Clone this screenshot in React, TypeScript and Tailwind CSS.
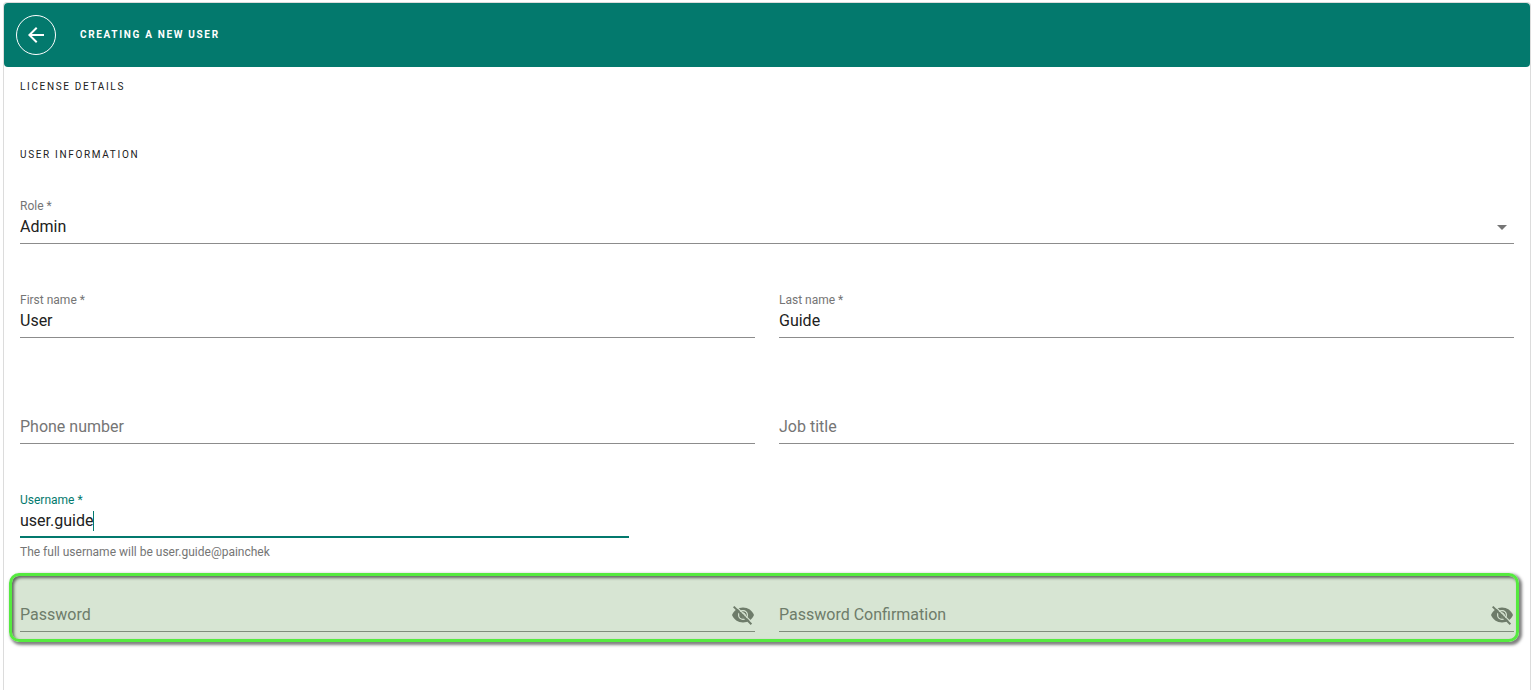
import { useState } from "react";
import { MdArrowBack } from "react-icons/md";

const inputStyles =
  "block h-[30px] w-full min-w-0 appearance-none rounded-none border-b border-[#8c8c8c] bg-transparent text-base text-[#212121] outline-none placeholder:text-[#757575] placeholder:opacity-100";

type FieldProps = {
  id: string;
  label: string;
  value: string;
  onChange: (value: string) => void;
};

function EyeOffIcon({ id }: { id: string }) {
  return (
    <svg viewBox="0 0 24 24" aria-hidden="true" className="size-6">
      <mask id={id}>
        <rect width="24" height="24" fill="white" />
        <circle cx="12" cy="12" r="4.4" fill="none" stroke="black" strokeWidth="1.2" />
        <path d="M10.6 10.8a2 2 0 1 1 1 3" fill="none" stroke="black" strokeWidth="1" />
        <path d="M4 2.3l17.8 17.8" stroke="black" strokeWidth="1.2" />
      </mask>
      <path
        mask={`url(#${id})`}
        fill="currentColor"
        d="M12 4.5C7 4.5 2.73 7.61 1 12c1.73 4.39 6 7.5 11 7.5s9.27-3.11 11-7.5c-1.73-4.39-6-7.5-11-7.5z"
      />
      <path d="M2.7 3.6l17.7 17.7" stroke="currentColor" strokeWidth="2" />
    </svg>
  );
}

// label sits above the line once the field is filled in
function FilledField({ id, label, value, onChange }: FieldProps) {
  return (
    <div>
      <label htmlFor={id} className="block text-xs leading-4 text-[#757575]">
        {label}
      </label>
      <input
        id={id}
        type="text"
        value={value}
        onChange={(e) => onChange(e.target.value)}
        className={`${inputStyles} pb-[5px]`}
      />
    </div>
  );
}

function EmptyField({ id, label, value, onChange }: FieldProps) {
  return (
    <div className="pt-4">
      <input
        id={id}
        type="text"
        aria-label={label}
        placeholder={label}
        value={value}
        onChange={(e) => onChange(e.target.value)}
        className={`${inputStyles} pb-[5px]`}
      />
    </div>
  );
}

function PasswordField({ id, label, value, onChange }: FieldProps) {
  return (
    <div className="pt-4">
      <div className="flex h-[30px] items-center border-b border-[#8c8c8c] pb-[3px]">
        <input
          id={id}
          type="password"
          aria-label={label}
          placeholder={label}
          value={value}
          onChange={(e) => onChange(e.target.value)}
          className="min-w-0 flex-1 bg-transparent text-base text-[#212121] outline-none placeholder:text-[#757575] placeholder:opacity-100"
        />
        <button type="button" aria-label="Show password" className="text-[#757575]">
          <EyeOffIcon id={`${id}-eye`} />
        </button>
      </div>
    </div>
  );
}

export default function App() {
  const [form, setForm] = useState({
    role: "Admin",
    firstName: "User",
    lastName: "Guide",
    phone: "",
    jobTitle: "",
    username: "user.guide",
    password: "",
    confirmation: "",
  });

  const update = (key: keyof typeof form) => (value: string) =>
    setForm((prev) => ({ ...prev, [key]: value }));

  return (
    <main className="flex min-h-screen flex-col bg-white pt-0.5 pr-[5px] pl-[3px] font-['Roboto',sans-serif]">
      <div className="flex-1 rounded-t border-x border-t border-[#dcdcdc]">
        <header className="flex h-16 items-center gap-6 rounded bg-[#03796d] px-3 text-white">
          <button
            type="button"
            aria-label="Back"
            className="flex size-10 items-center justify-center rounded-full border border-white"
          >
            <MdArrowBack className="size-6" />
          </button>
          <h1 className="text-[10px] leading-5 font-bold tracking-[0.1666em] uppercase">
            Creating a new user
          </h1>
        </header>

        <form className="px-4 pt-[10px] pb-12" onSubmit={(e) => e.preventDefault()}>
          <h2 className="text-[10px] leading-5 tracking-[0.1666em] text-[#212121] uppercase">
            License details
          </h2>
          <h2 className="mt-12 text-[10px] leading-5 tracking-[0.1666em] text-[#212121] uppercase">
            User information
          </h2>

          <div className="mt-[33px]">
            <label htmlFor="role" className="block text-xs leading-4 text-[#757575]">
              Role *
            </label>
            <div className="relative">
              <select
                id="role"
                value={form.role}
                onChange={(e) => update("role")(e.target.value)}
                className={`${inputStyles} pb-[3px]`}
              >
                <option>Admin</option>
                <option>Carer</option>
              </select>
              <svg
                viewBox="0 0 10 5"
                className="pointer-events-none absolute top-[11px] right-[7px] h-[5px] w-[10px] fill-[#757575]"
              >
                <path d="M0 0h10L5 5z" />
              </svg>
            </div>
          </div>

          <div className="mt-12 grid grid-cols-2 gap-6">
            <FilledField id="firstName" label="First name *" value={form.firstName} onChange={update("firstName")} />
            <FilledField id="lastName" label="Last name *" value={form.lastName} onChange={update("lastName")} />
          </div>

          <div className="mt-15 grid grid-cols-2 gap-6">
            <EmptyField id="phone" label="Phone number" value={form.phone} onChange={update("phone")} />
            <EmptyField id="jobTitle" label="Job title" value={form.jobTitle} onChange={update("jobTitle")} />
          </div>

          <div className="mt-12 w-[609px] max-w-full">
            <label htmlFor="username" className="block text-xs leading-4 text-[#03796d]">
              Username *
            </label>
            <div className="flex h-[30px] items-center border-b-2 border-[#03796d] pb-0.5">
              <input
                id="username"
                type="text"
                value={form.username}
                onChange={(e) => update("username")(e.target.value)}
                className="field-sizing-content max-w-full bg-transparent text-base text-[#212121] caret-transparent outline-none"
              />
              <span className="h-5 w-px bg-[#03796d]" />
            </div>
            <p className="mt-1.5 text-xs leading-4 text-[#757575]">
              The full username will be {form.username}@painchek
            </p>
          </div>

          <div className="relative mt-[26px] grid grid-cols-2 gap-6">
            <PasswordField id="password" label="Password" value={form.password} onChange={update("password")} />
            <PasswordField
              id="confirmation"
              label="Password Confirmation"
              value={form.confirmation}
              onChange={update("confirmation")}
            />
            {/* highlight around the password row */}
            <div className="pointer-events-none absolute -top-[13px] -right-[5px] -bottom-[10px] -left-[11px] rounded-[10px] border-3 border-[#55ea3f] bg-[rgba(88,146,72,0.24)] shadow-[2px_2px_3px_1px_rgba(0,0,0,0.5),inset_2px_2px_3px_rgba(0,0,0,0.55)]" />
          </div>
        </form>
      </div>
    </main>
  );
}
